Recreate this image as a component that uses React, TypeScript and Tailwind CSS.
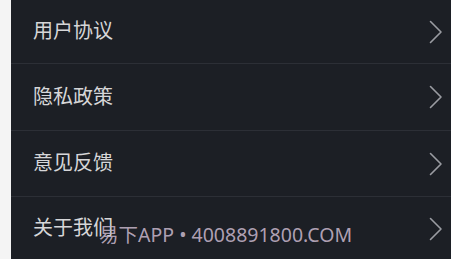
import React from "react";

const items = ["用户协议", "隐私政策", "意见反馈", "关于我们"];
const heights = ["h-[64px]", "h-[67px]", "h-[66px]", "h-[63px]"];

function Chevron() {
  return (
    <svg width="14" height="24" viewBox="0 0 14 24" fill="none">
      <path d="M1.5 1.5 L12 12 L1.5 22.5" stroke="#9a9ca2" strokeWidth="1.6" strokeLinecap="round" strokeLinejoin="round" />
    </svg>
  );
}

export default function App() {
  return (
    <div className="relative w-[451px] h-[259px] overflow-hidden flex bg-white" style={{ fontFamily: '"Noto Sans", "Noto Sans CJK SC", sans-serif' }}>
      <div className="w-[11px] bg-[#f4f4f4]" />
      <div className="flex-1 flex flex-col bg-[#1c1f25]">
        {items.map((t, i) => (
          <div
            key={t}
            className={`${heights[i]} shrink-0 flex items-center justify-between pl-[22px] pr-[8px] ${i < 3 ? "border-b border-[#2c2f36]" : ""}`}
          >
            <span className="text-[20px] text-[#d6d6d8] leading-none pb-[3px]" style={{ fontFamily: '"Noto Sans CJK SC", sans-serif' }}>{t}</span>
            <Chevron />
          </div>
        ))}
      </div>
      <div className="absolute left-[99px] top-[225px] text-[19.5px] leading-none text-[#c2b2c6]/90 whitespace-nowrap" style={{ fontFamily: '"Noto Sans", "Noto Sans CJK SC", sans-serif' }}>
        易下APP • 4008891800.COM
      </div>
    </div>
  );
}
